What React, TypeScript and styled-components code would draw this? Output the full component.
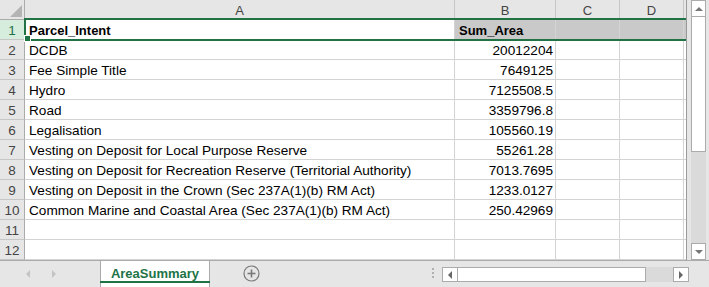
import React from "react";
import styled, { createGlobalStyle } from "styled-components";

const Global = createGlobalStyle`
  html, body { margin: 0; padding: 0; background: #fff; overflow: hidden; }
  * { box-sizing: border-box; }
`;

const FONT = `"Liberation Sans", Arial, sans-serif`;

const Window = styled.div`
  width: 709px;
  height: 287px;
  display: flex;
  flex-direction: column;
  font-family: ${FONT};
  background: #e6e6e6;
`;

const Main = styled.div`
  display: flex;
  height: 260px;
`;

const GridWrap = styled.div`
  position: relative;
  width: 687px;
  height: 260px;
  background: #fff;
  overflow: hidden;
  border-right: 1px solid #9a9a9a;
`;

const Grid = styled.div`
  display: grid;
  grid-template-columns: 25px 430px 101px 64px 64px 3px;
  grid-template-rows: 20px repeat(12, 20px);
`;

const Corner = styled.div`
  position: relative;
  background: #e6e6e6;
  border-right: 1px solid #ababab;
  border-bottom: 1px solid #ababab;
  &::after {
    content: "";
    position: absolute;
    right: 2px;
    bottom: 2px;
    width: 0;
    height: 0;
    border-left: 12px solid transparent;
    border-bottom: 12px solid #b4b4b4;
  }
`;

const ColHead = styled.div`
  background: #e6e6e6;
  border-right: 1px solid #c6c6c6;
  border-bottom: 1px solid #ababab;
  color: #444;
  font-size: 13px;
  display: flex;
  align-items: center;
  justify-content: center;
  padding-top: 1px;
`;

const RowHead = styled.div<{ $active?: boolean }>`
  background: ${(p) => (p.$active ? "#d6ecdd" : "#e6e6e6")};
  color: ${(p) => (p.$active ? "#217346" : "#444")};
  border-right: 1px solid #ababab;
  border-bottom: 1px solid #c6c6c6;
  font-size: 13.5px;
  display: flex;
  align-items: center;
  justify-content: center;
  padding-top: 1px;
`;

const Cell = styled.div<{ $num?: boolean; $bold?: boolean; $fill?: boolean }>`
  border-right: 1px solid #d4d4d4;
  border-bottom: 1px solid #d4d4d4;
  background: ${(p) => (p.$fill ? "#c9c9c9" : "#fff")};
  color: #000;
  font-size: ${(p) => (p.$bold ? "13px" : "13.6px")};
  font-weight: ${(p) => (p.$bold ? 700 : 400)};
  display: flex;
  align-items: center;
  justify-content: ${(p) => (p.$num ? "flex-end" : "flex-start")};
  padding: 1px 2px 0 4px;
  white-space: nowrap;
  overflow: hidden;
`;

const Selection = styled.div`
  position: absolute;
  left: 24px;
  top: 18px;
  width: 680px;
  height: 23px;
  border: 2px solid #217346;
  border-right: none;
  pointer-events: none;
  &::after {
    content: "";
    position: absolute;
    left: -2px;
    bottom: -3px;
    width: 5px;
    height: 5px;
    background: #217346;
    border: 1px solid #fff;
  }
`;

const VScroll = styled.div`
  width: 22px;
  height: 260px;
  background: #e6e6e6;
  padding: 0 3px 0 4px;
  display: flex;
`;

const VTrack = styled.div`
  flex: 1;
  background: #dadada;
  display: flex;
  flex-direction: column;
`;

const ArrowBox = styled.div`
  width: 15px;
  height: 17px;
  background: #fff;
  border: 1px solid #ababab;
  display: flex;
  align-items: center;
  justify-content: center;
`;

const VThumb = styled.div`
  height: 135px;
  background: #fff;
  border: 1px solid #ababab;
  border-top: none;
`;

const Spacer = styled.div`
  flex: 1;
`;

const TabBar = styled.div`
  height: 27px;
  display: flex;
  align-items: stretch;
  background: #e6e6e6;
  border-top: 1px solid #ababab;
`;

const NavArea = styled.div`
  width: 100px;
  display: flex;
  align-items: center;
  padding-left: 26px;
  gap: 22px;
`;

const Tab = styled.div`
  width: 110px;
  margin-top: -1px;
  background: #fff;
  border: 1px solid #ababab;
  border-bottom: none;
  display: flex;
  align-items: center;
  justify-content: center;
  position: relative;
  color: #217346;
  font-weight: 700;
  font-size: 13px;
  padding-bottom: 2px;
  &::after {
    content: "";
    position: absolute;
    left: -1px;
    right: -1px;
    bottom: 4px;
    height: 2px;
    background: #217346;
  }
`;

const AddArea = styled.div`
  width: 85px;
  display: flex;
  align-items: center;
  padding-left: 33px;
  padding-bottom: 2px;
`;

const Dots = styled.div`
  width: 14px;
  display: flex;
  flex-direction: column;
  align-items: center;
  justify-content: center;
  gap: 2px;
  margin-right: 2px;
  padding-bottom: 2px;
  span {
    width: 2px;
    height: 2px;
    background: #b0b0b0;
  }
`;

const HScroll = styled.div`
  width: 247px;
  height: 15px;
  margin-top: 6px;
  display: flex;
  background: #dadada;
  margin-right: 20px;
`;

const HArrow = styled.div`
  width: 16px;
  height: 15px;
  background: #fff;
  border: 1px solid #ababab;
  display: flex;
  align-items: center;
  justify-content: center;
`;

const HThumb = styled.div`
  width: 188px;
  background: #fff;
  border: 1px solid #ababab;
  border-left: none;
`;

const rows: [string, string][] = [
  ["DCDB", "20012204"],
  ["Fee Simple Title", "7649125"],
  ["Hydro", "7125508.5"],
  ["Road", "3359796.8"],
  ["Legalisation", "105560.19"],
  ["Vesting on Deposit for Local Purpose Reserve", "55261.28"],
  ["Vesting on Deposit for Recreation Reserve (Territorial Authority)", "7013.7695"],
  ["Vesting on Deposit in the Crown (Sec 237A(1)(b) RM Act)", "1233.0127"],
  ["Common Marine and Coastal Area (Sec 237A(1)(b) RM Act)", "250.42969"],
  ["", ""],
  ["", ""],
];

const Tri = ({ dir, color }: { dir: "up" | "down" | "left" | "right"; color: string }) => {
  const pts =
    dir === "up"
      ? "0,4 4,0 8,4"
      : dir === "down"
      ? "0,0 8,0 4,4"
      : dir === "left"
      ? "4,0 4,8 0,4"
      : "0,0 0,8 4,4";
  const w = dir === "up" || dir === "down" ? 8 : 4;
  const h = dir === "up" || dir === "down" ? 4 : 8;
  return (
    <svg width={w} height={h} viewBox={`0 0 ${w} ${h}`}>
      <polygon points={pts} fill={color} />
    </svg>
  );
};

export default function App() {
  return (
    <>
      <Global />
      <Window>
        <Main>
          <GridWrap>
            <Grid>
              <Corner />
              <ColHead>A</ColHead>
              <ColHead>B</ColHead>
              <ColHead>C</ColHead>
              <ColHead>D</ColHead>
              <ColHead />

              <RowHead $active>1</RowHead>
              <Cell $bold>Parcel_Intent</Cell>
              <Cell $bold $fill>Sum_Area</Cell>
              <Cell $fill />
              <Cell $fill />
              <Cell $fill />

              {rows.map(([a, b], i) => (
                <React.Fragment key={i}>
                  <RowHead>{i + 2}</RowHead>
                  <Cell>{a}</Cell>
                  <Cell $num>{b}</Cell>
                  <Cell />
                  <Cell />
                  <Cell />
                </React.Fragment>
              ))}
            </Grid>
            <Selection />
          </GridWrap>
          <VScroll>
            <VTrack>
              <ArrowBox>
                <Tri dir="up" color="#777" />
              </ArrowBox>
              <VThumb />
              <Spacer />
              <ArrowBox>
                <Tri dir="down" color="#777" />
              </ArrowBox>
            </VTrack>
          </VScroll>
        </Main>
        <TabBar>
          <NavArea>
            <Tri dir="left" color="#c3c3c3" />
            <Tri dir="right" color="#c3c3c3" />
          </NavArea>
          <Tab>AreaSummary</Tab>
          <AddArea>
            <svg width="17" height="17" viewBox="0 0 17 17">
              <circle cx="8.5" cy="8.5" r="7.5" fill="none" stroke="#7a7a7a" strokeWidth="1.2" />
              <line x1="8.5" y1="4.5" x2="8.5" y2="12.5" stroke="#7a7a7a" strokeWidth="1.6" />
              <line x1="4.5" y1="8.5" x2="12.5" y2="8.5" stroke="#7a7a7a" strokeWidth="1.6" />
            </svg>
          </AddArea>
          <Spacer />
          <Dots>
            <span />
            <span />
            <span />
          </Dots>
          <HScroll>
            <HArrow>
              <Tri dir="left" color="#666" />
            </HArrow>
            <HThumb />
            <Spacer />
            <HArrow>
              <Tri dir="right" color="#666" />
            </HArrow>
          </HScroll>
        </TabBar>
      </Window>
    </>
  );
}
